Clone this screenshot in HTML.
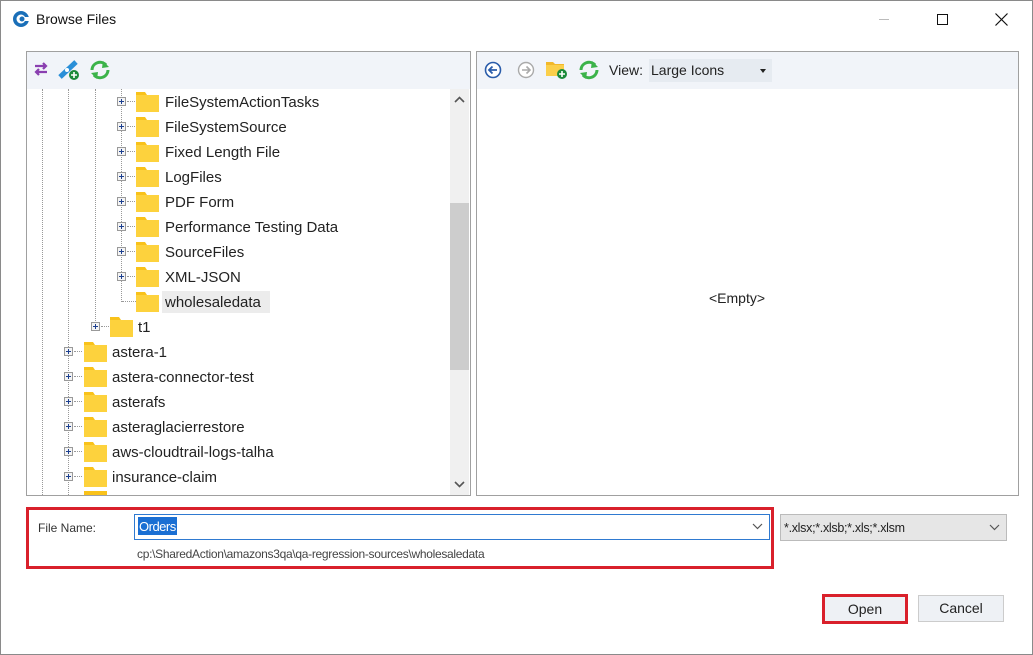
<!DOCTYPE html>
<html><head><style>
*{margin:0;padding:0;box-sizing:border-box}
body{width:1033px;height:655px;overflow:hidden;background:#fff;font-family:"Liberation Sans",sans-serif;position:relative}
.a{position:absolute}
.win{left:0;top:0;width:1033px;height:655px;border:1px solid #8a8a8a;background:#fff}
.panel{border:1px solid #a0a0a0;background:#fff}
.tb{background:#f1f4f9}
.row{position:absolute;height:25px;font-size:15px;color:#222;line-height:25px;white-space:nowrap}
.pb{position:absolute;width:9px;height:9px;border:1px solid #999;background:#f4f4f4;top:8px}
.pb:before{content:"";position:absolute;left:1px;top:3px;width:5px;height:1px;background:#1c3f8f}
.pb:after{content:"";position:absolute;left:3px;top:1px;width:1px;height:5px;background:#1c3f8f}
.hl{position:absolute;top:12px;width:8px;border-top:1px dotted #999}
.fd{position:absolute;top:2px;width:23px;height:21px}
.vl{position:absolute;border-left:1px dotted #999}
.tx{position:absolute;top:1px}
</style></head><body>
<div class="a win"></div>
<svg class="a" style="left:12px;top:10px" width="18" height="18" viewBox="0 0 18 18"><circle cx="9" cy="9" r="8" fill="#1a6fb8"/><circle cx="9" cy="9" r="4.5" fill="#fff"/><circle cx="10" cy="9" r="2.5" fill="#1a6fb8"/><rect x="13" y="7" width="5" height="4" fill="#fff"/></svg>
<div class="a" style="left:36px;top:11px;font-size:14px;color:#111">Browse Files</div>
<div class="a" style="left:879px;top:19px;width:10px;border-top:1px solid #bbb"></div>
<div class="a" style="left:937px;top:14px;width:11px;height:11px;border:1px solid #111"></div>
<svg class="a" style="left:995px;top:13px" width="13" height="13"><path d="M0.5 0.5L12.5 12.5M12.5 0.5L0.5 12.5" stroke="#111" stroke-width="1.2"/></svg>

<div class="a panel" style="left:26px;top:51px;width:445px;height:445px"></div>
<div class="a tb" style="left:27px;top:52px;width:443px;height:37px"></div>
<svg class="a" style="left:33px;top:61px" width="16" height="16"><path d="M2 5H13M10 2L13 5L10 8M14 11H3M6 8L3 11L6 14" stroke="#8a3fb0" stroke-width="2.2" fill="none"/></svg>
<svg class="a" style="left:58px;top:59px" width="24" height="22"><path d="M2 18L18 3" stroke="#2a8fd8" stroke-width="5"/><circle cx="9" cy="11" r="2" fill="#fff"/><circle cx="16" cy="16" r="5" fill="#1b8a3a"/><path d="M16 13V19M13 16H19" stroke="#fff" stroke-width="1.6"/></svg>
<svg class="a" style="left:88px;top:59px" width="24" height="22"><path d="M4 11A8 8 0 0 1 18 6" stroke="#3cb34a" stroke-width="3" fill="none"/><path d="M20 11A8 8 0 0 1 6 16" stroke="#3cb34a" stroke-width="3" fill="none"/><path d="M15 2L21 8L14 9Z" fill="#3cb34a"/><path d="M9 20L3 14L10 13Z" fill="#3cb34a"/></svg>
<div class="a" style="left:450px;top:89px;width:19px;height:406px;background:#f0f0f0"></div>
<div class="a" style="left:450px;top:203px;width:19px;height:167px;background:#cdcdcd"></div>
<svg class="a" style="left:454px;top:96px" width="11" height="7"><path d="M1 6L5.5 1.5L10 6" stroke="#555" stroke-width="1.6" fill="none"/></svg>
<svg class="a" style="left:454px;top:481px" width="11" height="7"><path d="M1 1L5.5 5.5L10 1" stroke="#555" stroke-width="1.6" fill="none"/></svg>
<div class="vl" style="left:42px;top:89px;height:406px"></div>
<div class="vl" style="left:68px;top:89px;height:406px"></div>
<div class="vl" style="left:95px;top:89px;height:238px"></div>
<div class="vl" style="left:121px;top:89px;height:213px"></div>

<div class="row" style="left:0;top:89px;width:445px">
 <div class="pb" style="left:117px"></div><div class="hl" style="left:127px"></div>
 <svg class="fd" style="left:136px" viewBox="0 0 23 21"><path d="M0 1H9L11 4H23V21H0Z" fill="#f9c21a"/><rect x="0" y="4" width="23" height="17" fill="#fdd23d"/></svg>
 <span class="tx" style="left:165px">FileSystemActionTasks</span></div>
<div class="row" style="left:0;top:114px;width:445px">
 <div class="pb" style="left:117px"></div><div class="hl" style="left:127px"></div>
 <svg class="fd" style="left:136px" viewBox="0 0 23 21"><path d="M0 1H9L11 4H23V21H0Z" fill="#f9c21a"/><rect x="0" y="4" width="23" height="17" fill="#fdd23d"/></svg>
 <span class="tx" style="left:165px">FileSystemSource</span></div>
<div class="row" style="left:0;top:139px;width:445px">
 <div class="pb" style="left:117px"></div><div class="hl" style="left:127px"></div>
 <svg class="fd" style="left:136px" viewBox="0 0 23 21"><path d="M0 1H9L11 4H23V21H0Z" fill="#f9c21a"/><rect x="0" y="4" width="23" height="17" fill="#fdd23d"/></svg>
 <span class="tx" style="left:165px">Fixed Length File</span></div>
<div class="row" style="left:0;top:164px;width:445px">
 <div class="pb" style="left:117px"></div><div class="hl" style="left:127px"></div>
 <svg class="fd" style="left:136px" viewBox="0 0 23 21"><path d="M0 1H9L11 4H23V21H0Z" fill="#f9c21a"/><rect x="0" y="4" width="23" height="17" fill="#fdd23d"/></svg>
 <span class="tx" style="left:165px">LogFiles</span></div>
<div class="row" style="left:0;top:189px;width:445px">
 <div class="pb" style="left:117px"></div><div class="hl" style="left:127px"></div>
 <svg class="fd" style="left:136px" viewBox="0 0 23 21"><path d="M0 1H9L11 4H23V21H0Z" fill="#f9c21a"/><rect x="0" y="4" width="23" height="17" fill="#fdd23d"/></svg>
 <span class="tx" style="left:165px">PDF Form</span></div>
<div class="row" style="left:0;top:214px;width:445px">
 <div class="pb" style="left:117px"></div><div class="hl" style="left:127px"></div>
 <svg class="fd" style="left:136px" viewBox="0 0 23 21"><path d="M0 1H9L11 4H23V21H0Z" fill="#f9c21a"/><rect x="0" y="4" width="23" height="17" fill="#fdd23d"/></svg>
 <span class="tx" style="left:165px">Performance Testing Data</span></div>
<div class="row" style="left:0;top:239px;width:445px">
 <div class="pb" style="left:117px"></div><div class="hl" style="left:127px"></div>
 <svg class="fd" style="left:136px" viewBox="0 0 23 21"><path d="M0 1H9L11 4H23V21H0Z" fill="#f9c21a"/><rect x="0" y="4" width="23" height="17" fill="#fdd23d"/></svg>
 <span class="tx" style="left:165px">SourceFiles</span></div>
<div class="row" style="left:0;top:264px;width:445px">
 <div class="pb" style="left:117px"></div><div class="hl" style="left:127px"></div>
 <svg class="fd" style="left:136px" viewBox="0 0 23 21"><path d="M0 1H9L11 4H23V21H0Z" fill="#f9c21a"/><rect x="0" y="4" width="23" height="17" fill="#fdd23d"/></svg>
 <span class="tx" style="left:165px">XML-JSON</span></div>
<div class="row" style="left:0;top:289px;width:445px">
 <div class="hl" style="left:122px;width:14px"></div>
 <div class="a" style="left:162px;top:2px;width:108px;height:22px;background:#ececec"></div>
 <svg class="fd" style="left:136px" viewBox="0 0 23 21"><path d="M0 1H9L11 4H23V21H0Z" fill="#f9c21a"/><rect x="0" y="4" width="23" height="17" fill="#fdd23d"/></svg>
 <span class="tx" style="left:165px">wholesaledata</span></div>
<div class="row" style="left:0;top:314px;width:445px">
 <div class="pb" style="left:91px"></div><div class="hl" style="left:101px"></div>
 <svg class="fd" style="left:110px" viewBox="0 0 23 21"><path d="M0 1H9L11 4H23V21H0Z" fill="#f9c21a"/><rect x="0" y="4" width="23" height="17" fill="#fdd23d"/></svg>
 <span class="tx" style="left:138px">t1</span></div>
<div class="row" style="left:0;top:339px;width:445px">
 <div class="pb" style="left:64px"></div><div class="hl" style="left:74px"></div>
 <svg class="fd" style="left:84px" viewBox="0 0 23 21"><path d="M0 1H9L11 4H23V21H0Z" fill="#f9c21a"/><rect x="0" y="4" width="23" height="17" fill="#fdd23d"/></svg>
 <span class="tx" style="left:112px">astera-1</span></div>
<div class="row" style="left:0;top:364px;width:445px">
 <div class="pb" style="left:64px"></div><div class="hl" style="left:74px"></div>
 <svg class="fd" style="left:84px" viewBox="0 0 23 21"><path d="M0 1H9L11 4H23V21H0Z" fill="#f9c21a"/><rect x="0" y="4" width="23" height="17" fill="#fdd23d"/></svg>
 <span class="tx" style="left:112px">astera-connector-test</span></div>
<div class="row" style="left:0;top:389px;width:445px">
 <div class="pb" style="left:64px"></div><div class="hl" style="left:74px"></div>
 <svg class="fd" style="left:84px" viewBox="0 0 23 21"><path d="M0 1H9L11 4H23V21H0Z" fill="#f9c21a"/><rect x="0" y="4" width="23" height="17" fill="#fdd23d"/></svg>
 <span class="tx" style="left:112px">asterafs</span></div>
<div class="row" style="left:0;top:414px;width:445px">
 <div class="pb" style="left:64px"></div><div class="hl" style="left:74px"></div>
 <svg class="fd" style="left:84px" viewBox="0 0 23 21"><path d="M0 1H9L11 4H23V21H0Z" fill="#f9c21a"/><rect x="0" y="4" width="23" height="17" fill="#fdd23d"/></svg>
 <span class="tx" style="left:112px">asteraglacierrestore</span></div>
<div class="row" style="left:0;top:439px;width:445px">
 <div class="pb" style="left:64px"></div><div class="hl" style="left:74px"></div>
 <svg class="fd" style="left:84px" viewBox="0 0 23 21"><path d="M0 1H9L11 4H23V21H0Z" fill="#f9c21a"/><rect x="0" y="4" width="23" height="17" fill="#fdd23d"/></svg>
 <span class="tx" style="left:112px">aws-cloudtrail-logs-talha</span></div>
<div class="row" style="left:0;top:464px;width:445px">
 <div class="pb" style="left:64px"></div><div class="hl" style="left:74px"></div>
 <svg class="fd" style="left:84px" viewBox="0 0 23 21"><path d="M0 1H9L11 4H23V21H0Z" fill="#f9c21a"/><rect x="0" y="4" width="23" height="17" fill="#fdd23d"/></svg>
 <span class="tx" style="left:112px">insurance-claim</span></div>
<svg class="a" style="left:84px;top:491px" width="23" height="4"><rect width="23" height="4" fill="#f9c21a"/></svg>

<div class="a panel" style="left:476px;top:51px;width:543px;height:445px"></div>
<div class="a tb" style="left:477px;top:52px;width:541px;height:37px"></div>
<svg class="a" style="left:484px;top:61px" width="18" height="18"><circle cx="9" cy="9" r="7.5" fill="#fff" stroke="#2a5caa" stroke-width="1.6"/><path d="M13 9H5.5M8.5 5.5L5 9L8.5 12.5" stroke="#2a5caa" stroke-width="1.8" fill="none"/></svg>
<svg class="a" style="left:517px;top:61px" width="18" height="18"><circle cx="9" cy="9" r="7.5" fill="#fff" stroke="#aaa" stroke-width="1.4"/><path d="M5 9H12.5M9.5 5.5L13 9L9.5 12.5" stroke="#aaa" stroke-width="1.6" fill="none"/></svg>
<svg class="a" style="left:546px;top:60px" width="22" height="20"><path d="M0 2H7L9 4H18V16H0Z" fill="#f2b82a"/><rect x="0" y="5" width="18" height="11" fill="#fbcf4a"/><circle cx="16" cy="14" r="5" fill="#1b8a3a"/><path d="M16 11V17M13 14H19" stroke="#fff" stroke-width="1.6"/></svg>
<svg class="a" style="left:577px;top:59px" width="24" height="22"><path d="M4 11A8 8 0 0 1 18 6" stroke="#3cb34a" stroke-width="3" fill="none"/><path d="M20 11A8 8 0 0 1 6 16" stroke="#3cb34a" stroke-width="3" fill="none"/><path d="M15 2L21 8L14 9Z" fill="#3cb34a"/><path d="M9 20L3 14L10 13Z" fill="#3cb34a"/></svg>
<div class="a" style="left:609px;top:62px;font-size:14px;color:#222">View:</div>
<div class="a" style="left:649px;top:59px;width:123px;height:23px;background:#e6ebf1;font-size:14px;color:#222;padding:3px 0 0 2px">Large Icons</div>
<div class="a" style="left:760px;top:69px;border-left:3px solid transparent;border-right:3px solid transparent;border-top:4px solid #222"></div>
<div class="a" style="left:709px;top:290px;font-size:14px;color:#222">&lt;Empty&gt;</div>

<div class="a" style="left:26px;top:507px;width:748px;height:62px;border:3px solid #d9202b"></div>
<div class="a" style="left:38px;top:521px;font-size:12px;color:#333">File Name:</div>
<div class="a" style="left:134px;top:514px;width:636px;height:26px;border:1px solid #2f7ad1;background:#fff"></div>
<div class="a" style="left:138px;top:517px;height:18px;background:#1a6fd3;color:#fff;font-size:13px;padding:1px 1px 0 1px;line-height:17px;letter-spacing:-0.5px">Orders</div>
<svg class="a" style="left:752px;top:523px" width="11" height="7"><path d="M1 1L5.5 5.5L10 1" stroke="#555" stroke-width="1.2" fill="none"/></svg>
<div class="a" style="left:137px;top:547px;font-size:12px;color:#444;letter-spacing:-0.3px">cp:\SharedAction\amazons3qa\qa-regression-sources\wholesaledata</div>
<div class="a" style="left:780px;top:514px;width:227px;height:27px;border:1px solid #bbb;background:#e6e6e6;font-size:12.5px;color:#222;padding:6px 0 0 3px;letter-spacing:-0.3px">*.xlsx;*.xlsb;*.xls;*.xlsm</div>
<svg class="a" style="left:989px;top:524px" width="11" height="7"><path d="M1 1L5.5 5.5L10 1" stroke="#555" stroke-width="1.2" fill="none"/></svg>

<div class="a" style="left:822px;top:594px;width:86px;height:30px;border:3px solid #d9202b;background:#eef1f5;font-size:14px;color:#222;text-align:center;line-height:24px">Open</div>
<div class="a" style="left:918px;top:595px;width:86px;height:27px;border:1px solid #ccc;background:#eef1f5;font-size:14px;color:#222;text-align:center;line-height:25px">Cancel</div>
</body></html>
